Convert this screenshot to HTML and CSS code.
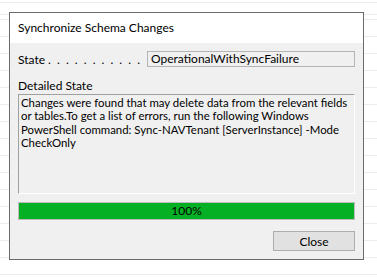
FILE: index.html
```html
<!DOCTYPE html>
<html lang="en">
<head>
    <meta charset="UTF-8">
    <title>Synchronize Schema Changes</title>
    <link rel="stylesheet" href="styles.css">
</head>
<body>
    <div class="dialog">
        <div class="title-bar">Synchronize Schema Changes</div>
        <div class="dialog-body">
            <div class="state-row">
                <span class="state-label">State <span class="dots">. . . . . . . . . . .</span></span>
                <div class="state-value">OperationalWithSyncFailure</div>
            </div>
            <div class="detail-label">Detailed State</div>
            <div class="detail-box">Changes were found that may delete data from the relevant fields<br>or tables.To get a list of errors, run the following Windows<br>PowerShell command: Sync-NAVTenant [ServerInstance] -Mode<br>CheckOnly</div>
            <div class="progress">
                <div class="progress-fill" style="width: 100%"></div>
                <span class="progress-text">100%</span>
            </div>
            <div class="buttons">
                <button type="button">Close</button>
            </div>
        </div>
    </div>
</body>
</html>
```

FILE: styles.css
```css
body {
    margin: 0;
    padding: 12px 0 0 9px;
    height: 277px;
    box-sizing: border-box;
    font-family: Lato, "Noto Sans", sans-serif;
    font-size: 12px;
    color: #000;
    background-color: #fff;
    background-image:
        linear-gradient(#ececec, #ececec),
        repeating-linear-gradient(to bottom, transparent 0, transparent 2px, #ececec 2px, #ececec 3px, transparent 3px, transparent 17px);
    background-size: 100% 1px, 100% 100%;
    background-position: 0 2px, 0 17px;
    background-repeat: no-repeat, repeat;
    overflow: hidden;
}
.dialog {
    width: 355px;
    height: 248px;
    box-sizing: border-box;
    border: 1px solid #6b6b6b;
    background-color: #f0f0f0;
    display: flex;
    flex-direction: column;
}
.title-bar {
    height: 30px;
    background-color: #fff;
    padding-left: 8px;
    line-height: 30px;
}
.dialog-body {
    flex: 1;
    padding: 8px 8px 8px 8px;
    display: flex;
    flex-direction: column;
}
.state-row {
    display: flex;
    align-items: center;
    height: 16px;
}
.state-label {
    flex: 0 0 129px;
    white-space: nowrap;
    overflow: hidden;
}
.dots {
    letter-spacing: 1.5px;
}
.state-value {
    flex: 1;
    height: 16px;
    box-sizing: border-box;
    border: 1px solid #b4b4b4;
    padding-left: 3px;
    line-height: 14px;
}
.detail-label {
    margin-top: 11px;
    line-height: 15px;
}
.detail-box {
    margin-top: 1px;
    height: 100px;
    box-sizing: border-box;
    border-top: 1px solid #a0a0a0;
    border-left: 1px solid #a0a0a0;
    border-right: 1px solid #fff;
    border-bottom: 1px solid #fff;
    padding: 1px 2px;
    font-size: 11.4px;
    line-height: 13.3px;
    white-space: nowrap;
    overflow: hidden;
}
.progress {
    position: relative;
    margin-top: 8px;
    height: 18px;
    box-sizing: border-box;
    border: 1px solid #bcbcbc;
    background-color: #e6e6e6;
}
.progress-fill {
    height: 100%;
    background-color: #06b025;
}
.progress-text {
    position: absolute;
    top: 0;
    left: 0;
    right: 0;
    text-align: center;
    line-height: 16px;
}
.buttons {
    margin-top: auto;
    display: flex;
    justify-content: flex-end;
}
button {
    width: 82px;
    height: 20px;
    border: 1px solid #adadad;
    background-color: #e1e1e1;
    font-family: inherit;
    font-size: 12px;
    padding: 0;
    color: #000;
}
```
